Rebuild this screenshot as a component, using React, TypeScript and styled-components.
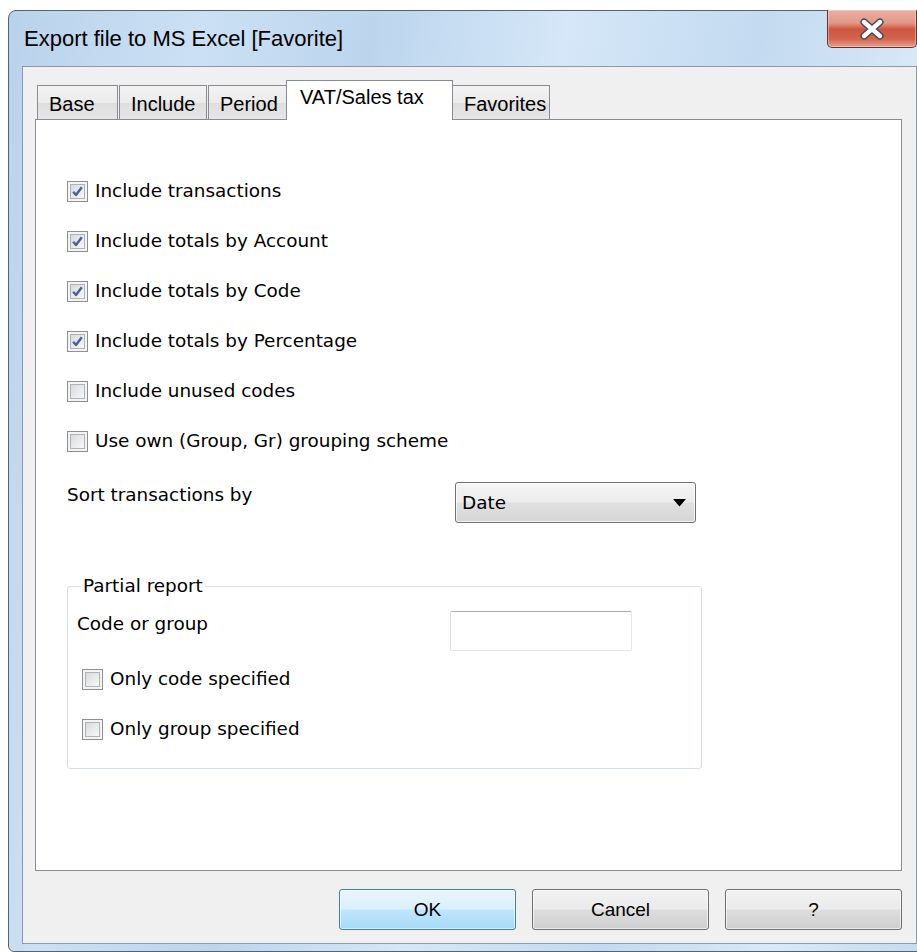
import React from "react";
import styled, { createGlobalStyle } from "styled-components";

const GlobalStyle = createGlobalStyle`
  html, body {
    margin: 0;
    padding: 0;
    background: #ffffff;
    overflow: hidden;
  }
  * { box-sizing: border-box; }
`;

const uiFont = `"DejaVu Sans", Verdana, sans-serif`;
const chromeFont = `"Liberation Sans", Arial, sans-serif`;

const Window = styled.div`
  margin: 10px 0 0 8px;
  width: 916px;
  height: 942px;
  border: 1px solid #55636f;
  border-radius: 8px 8px 6px 6px;
  background: linear-gradient(
    100deg,
    #b9d2eb 0%,
    #cbe0f4 18%,
    #bcd5ed 34%,
    #d5e7f8 52%,
    #c3daf0 70%,
    #d9e9f8 86%,
    #c5dbf0 100%
  );
  padding: 0 6px 7px 13px;
  display: flex;
  flex-direction: column;
`;

const TitleBar = styled.div`
  height: 55px;
  display: flex;
  align-items: flex-start;
  justify-content: space-between;
`;

const Title = styled.div`
  margin-top: 15px;
  padding-left: 2px;
  font-family: ${chromeFont};
  font-size: 22px;
  line-height: 26px;
  color: #000;
`;

const CloseButton = styled.div`
  margin-top: -1px;
  width: 90px;
  height: 38px;
  border: 1px solid #6e3128;
  border-top: none;
  border-radius: 0 0 5px 5px;
  background: linear-gradient(
    #eab0a5 0%,
    #e29886 35%,
    #d0553e 52%,
    #d4634d 78%,
    #e4a08f 100%
  );
  box-shadow: inset 0 0 0 1px rgba(255, 220, 210, 0.45);
  display: flex;
  align-items: center;
  justify-content: center;
`;

const Client = styled.div`
  flex: 1;
  background: #f0f0f0;
  border: 1px solid #8b99a8;
  display: flex;
  flex-direction: column;
  padding: 13px 14px 0 12px;
`;

const TabStrip = styled.div`
  height: 39px;
  display: flex;
  align-items: flex-end;
  gap: 1px;
  padding-left: 2px;
  position: relative;
  z-index: 1;
`;

const Tab = styled.div<{ $w: number; $active?: boolean }>`
  width: ${(p) => p.$w}px;
  height: ${(p) => (p.$active ? 40 : 34)}px;
  margin: ${(p) => (p.$active ? "0 -2px -1px -2px" : "0")};
  border: 1px solid #898c95;
  border-bottom: none;
  background: ${(p) =>
    p.$active ? "#ffffff" : "linear-gradient(#f3f3f3 0%, #ebebeb 50%, #dedede 51%, #e6e6e6 100%)"};
  font-family: ${chromeFont};
  font-size: 20px;
  line-height: 24px;
  color: #000;
  padding: ${(p) => (p.$active ? "4px 0 0 13px" : "6px 0 0 11px")};
  white-space: nowrap;
  position: relative;
  z-index: ${(p) => (p.$active ? 2 : 1)};
`;

const Panel = styled.div`
  height: 752px;
  background: #ffffff;
  border: 1px solid #898c95;
  display: flex;
  flex-direction: column;
  padding: 46px 0 0 31px;
`;

const CheckRow = styled.label<{ $h?: number }>`
  height: ${(p) => p.$h ?? 50}px;
  display: flex;
  align-items: center;
  gap: 7px;
  font-family: ${uiFont};
  font-size: 18.4px;
  line-height: 22px;
  color: #000;
`;

const Box = styled.span`
  width: 21px;
  height: 21px;
  flex: none;
  border: 1px solid #8e8f8f;
  background: #f4f4f4;
  padding: 2px;
  display: flex;
`;

const BoxInner = styled.span`
  flex: 1;
  border: 1px solid #aeb3b9;
  background: linear-gradient(135deg, #d7d9dc 0%, #eaebec 55%, #f8f8f8 100%);
  display: flex;
  align-items: center;
  justify-content: center;
`;

const SortRow = styled.div`
  margin-top: 16px;
  display: flex;
  align-items: flex-start;
`;

const FieldLabel = styled.div<{ $w: number; $top?: number }>`
  width: ${(p) => p.$w}px;
  padding-top: ${(p) => p.$top ?? 0}px;
  font-family: ${uiFont};
  font-size: 18.4px;
  line-height: 22px;
  color: #000;
`;

const Select = styled.div`
  width: 241px;
  height: 41px;
  border: 1px solid #707070;
  border-radius: 3px;
  background: linear-gradient(#f4f4f4 0%, #ececec 48%, #e0e0e0 52%, #d6d6d6 100%);
  box-shadow: inset 0 0 0 1px rgba(255, 255, 255, 0.7);
  display: flex;
  align-items: center;
  justify-content: space-between;
  padding: 0 9px 0 6px;
  font-family: ${uiFont};
  font-size: 18.4px;
  color: #000;
`;

const GroupBox = styled.fieldset`
  margin: 52px 0 0 0;
  width: 635px;
  border: 1px solid #d5dfe5;
  border-radius: 3px;
  padding: 0 0 14px 0;
  min-inline-size: 0;
`;

const Legend = styled.legend`
  margin-left: 13px;
  padding: 0 2px;
  font-family: ${uiFont};
  font-size: 18.4px;
  line-height: 22px;
  color: #000;
`;

const CodeRow = styled.div`
  margin-top: 14px;
  padding-left: 9px;
  display: flex;
  align-items: flex-start;
`;

const TextInput = styled.div`
  width: 182px;
  height: 40px;
  border: 1px solid #e2e7ed;
  border-top-color: #abadb3;
  border-left-color: #dbdfe6;
  border-radius: 2px;
  background: #ffffff;
`;

const GroupChecks = styled.div`
  margin-top: 3px;
  padding-left: 14px;
  display: flex;
  flex-direction: column;
`;

const ButtonRow = styled.div`
  margin-top: 18px;
  align-self: flex-end;
  display: flex;
  gap: 16px;
`;

const Button = styled.div<{ $default?: boolean }>`
  width: 177px;
  height: 41px;
  border: 1px solid ${(p) => (p.$default ? "#3c7fb1" : "#707070")};
  border-radius: 3px;
  background: ${(p) =>
    p.$default
      ? "linear-gradient(#eaf6fd 0%, #d9f0fc 48%, #bee6fd 52%, #a7d9f5 100%)"
      : "linear-gradient(#f2f2f2 0%, #ebebeb 48%, #dddddd 52%, #cfcfcf 100%)"};
  box-shadow: inset 0 0 0 1px rgba(255, 255, 255, 0.6);
  display: flex;
  align-items: center;
  justify-content: center;
  font-family: ${chromeFont};
  font-size: 19px;
  color: #000;
`;

/* white X with a dark outline, as on the caption close button */
const CloseGlyph = () => (
  <svg width="26" height="22" viewBox="0 0 26 22">
    <path d="M5 4 L21 18 M21 4 L5 18" stroke="#3d4656" strokeWidth="7" strokeLinecap="round" fill="none" />
    <path d="M5 4 L21 18 M21 4 L5 18" stroke="#ffffff" strokeWidth="4.4" strokeLinecap="round" fill="none" />
  </svg>
);

const CheckMark = () => (
  <svg width="13" height="13" viewBox="0 0 13 13">
    <path d="M2.2 6.8 L5 10 L10.8 2.2" stroke="#4b5f9b" strokeWidth="2.4" fill="none" strokeLinejoin="round" />
  </svg>
);

const DropArrow = () => (
  <svg width="13" height="8" viewBox="0 0 13 8">
    <path d="M0 0 H13 L6.5 7.5 Z" fill="#000" />
  </svg>
);

const Check = ({ checked, children, h }: { checked?: boolean; children: React.ReactNode; h?: number }) => (
  <CheckRow $h={h}>
    <Box>
      <BoxInner>{checked && <CheckMark />}</BoxInner>
    </Box>
    <span>{children}</span>
  </CheckRow>
);

const tabs = [
  { label: "Base", w: 81 },
  { label: "Include", w: 88 },
  { label: "Period", w: 79 },
  { label: "VAT/Sales tax", w: 163, active: true },
  { label: "Favorites", w: 98 },
];

export default function App() {
  return (
    <>
      <GlobalStyle />
      <Window>
        <TitleBar>
          <Title>Export file to MS Excel [Favorite]</Title>
          <CloseButton>
            <CloseGlyph />
          </CloseButton>
        </TitleBar>
        <Client>
          <TabStrip>
            {tabs.map((t) => (
              <Tab key={t.label} $w={t.active ? t.w + 4 : t.w} $active={t.active}>
                {t.label}
              </Tab>
            ))}
          </TabStrip>
          <Panel>
            <Check checked>Include transactions</Check>
            <Check checked>Include totals by Account</Check>
            <Check checked>Include totals by Code</Check>
            <Check checked>Include totals by Percentage</Check>
            <Check>Include unused codes</Check>
            <Check>Use own (Group, Gr) grouping scheme</Check>
            <SortRow>
              <FieldLabel $w={388} $top={2}>
                Sort transactions by
              </FieldLabel>
              <Select>
                <span>Date</span>
                <DropArrow />
              </Select>
            </SortRow>
            <GroupBox>
              <Legend>Partial report</Legend>
              <CodeRow>
                <FieldLabel $w={373} $top={2}>
                  Code or group
                </FieldLabel>
                <TextInput />
              </CodeRow>
              <GroupChecks>
                <Check>Only code specified</Check>
                <Check>Only group specified</Check>
              </GroupChecks>
            </GroupBox>
          </Panel>
          <ButtonRow>
            <Button $default>OK</Button>
            <Button>Cancel</Button>
            <Button>?</Button>
          </ButtonRow>
        </Client>
      </Window>
    </>
  );
}
